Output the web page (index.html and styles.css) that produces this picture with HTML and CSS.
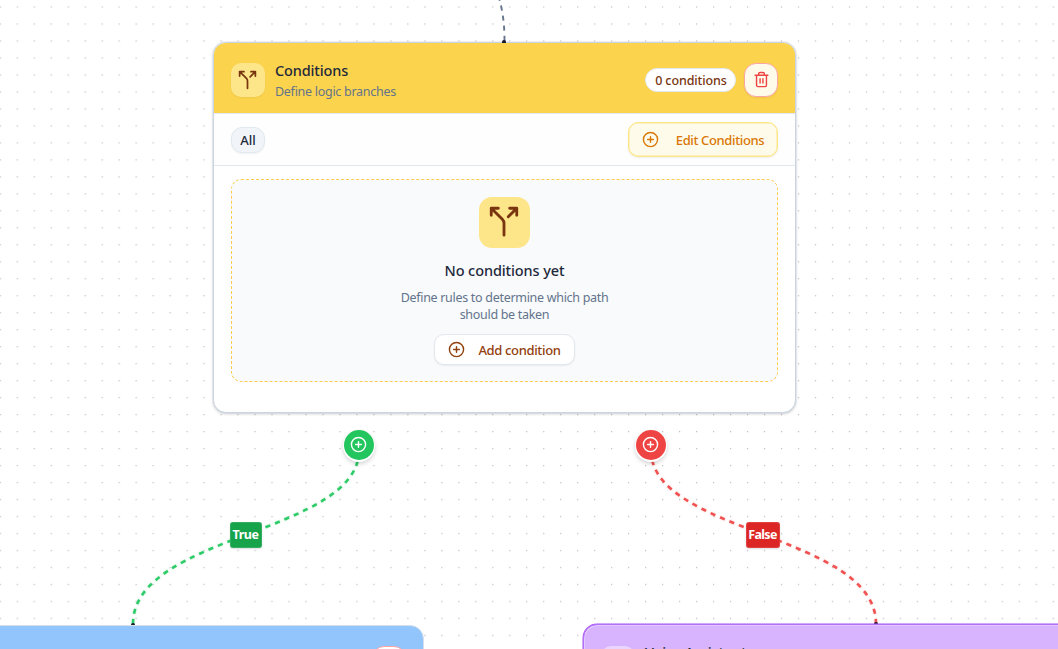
FILE: index.html
```
<!DOCTYPE html>
<html lang="en">
<head>
<meta charset="utf-8">
<title>Flow editor</title>
<link rel="stylesheet" href="styles.css">
</head>
<body>
<svg class="symbols" width="0" height="0">
  <defs>
    <pattern id="dots" x="-0.3" y="6.4" width="16.983" height="16.983" patternUnits="userSpaceOnUse"><circle cx=".65" cy=".65" r=".6" fill="#adadad"/></pattern>
    <symbol id="split" viewBox="0 0 24 24"><path d="M16 3h5v5M8 3H3v5M12 22v-8.300a4 4 0 0 0-1.172-2.872L3 3M15 9l6-6"/></symbol>
    <symbol id="plus" viewBox="0 0 24 24"><circle cx="12" cy="12" r="10"/><path d="M8 12h8M12 8v8"/></symbol>
    <symbol id="trash" viewBox="0 0 24 24"><path d="M3 6h18M19 6v14a2 2 0 0 1-2 2H7a2 2 0 0 1-2-2V6M8 6V4a2 2 0 0 1 2-2h4a2 2 0 0 1 2 2v2M10 11v6M14 11v6"/></symbol>
  </defs>
</svg>
<main class="canvas">
  <svg class="edges" width="1058" height="649">
    <rect width="1058" height="649" fill="url(#dots)"/>
    <path class="edge edge-in" d="M504.500 41C504.500 22 502.500 10 498 -6"/>
    <path class="edge edge-true" d="M133 624C133 534 359 534 359 450"/>
    <path class="edge edge-false" d="M876 624C876 534 651 534 651 450"/>
  </svg>

  <section class="node conditions">
    <header class="node-head">
      <span class="tile tile-small"><svg class="icon"><use href="#split"/></svg></span>
      <div class="titles"><h2 class="title">Conditions</h2><p class="subtitle">Define logic branches</p></div>
      <span class="count">0 conditions</span>
      <button class="delete"><svg class="icon"><use href="#trash"/></svg></button>
    </header>
    <div class="toolbar">
      <span class="filter">All</span>
      <button class="edit"><svg class="icon"><use href="#plus"/></svg><span>Edit Conditions</span></button>
    </div>
    <div class="body">
      <div class="empty">
        <span class="tile tile-large"><svg class="icon"><use href="#split"/></svg></span>
        <h3 class="empty-title">No conditions yet</h3>
        <p class="empty-text">Define rules to determine which path<br>should be taken</p>
        <button class="add"><svg class="icon"><use href="#plus"/></svg><span>Add condition</span></button>
      </div>
    </div>
  </section>

  <button class="handle handle-true"><svg class="icon"><use href="#plus"/></svg></button>
  <button class="handle handle-false"><svg class="icon"><use href="#plus"/></svg></button>
  <span class="branch branch-true">True</span>
  <span class="branch branch-false">False</span>
  <i class="port port-in"></i><i class="port port-true"></i><i class="port port-false"></i>

  <section class="node blue"><button class="delete"><svg class="icon"><use href="#trash"/></svg></button></section>
  <section class="node purple"><span class="tile tile-small"></span><h2 class="title">Voice Assistant</h2></section>
</main>
</body>
</html>
```
FILE: styles.css
```
* { box-sizing: border-box; }
body { margin: 0; font-family: "Noto Sans", "Open Sans", sans-serif; }
h2, h3, p { margin: 0; }
button { font: inherit; padding: 0; margin: 0; }
.symbols { position: absolute; }
.icon { display: block; width: 17px; height: 17px; fill: none; stroke: currentColor; stroke-width: 2; stroke-linecap: round; stroke-linejoin: round; flex: none; }
.canvas { position: relative; width: 1058px; height: 649px; overflow: hidden; background: #fff; }
.edges { position: absolute; inset: 0; }
.edge { fill: none; stroke-width: 2.600; stroke-dasharray: 5.100 5.100; }
.edge-in { stroke: #64748b; stroke-width: 1.900; }
.edge-true { stroke: #2fcb69; filter: drop-shadow(0 0 1px #22c55e44); }
.edge-false { stroke: #f05252; filter: drop-shadow(0 0 1px #ef444444); }

.node { position: absolute; overflow: hidden; }
.conditions { left: 213px; top: 42px; width: 583px; height: 371px; border: 1px solid #cbd5e1; border-radius: 13px; background: #fff; box-shadow: 0 0 0 .5px #cbd5e180, 0 1px 3px #0003; }
.node-head { display: flex; align-items: center; height: 71px; padding: 3px 17px 0; background: #fcd34d; border-bottom: 1px solid #e2e8f0; }
.tile { display: flex; align-items: center; justify-content: center; background: #fde68a; color: #78350f; flex: none; }
.tile-small { width: 34px; height: 34px; border-radius: 10px; box-shadow: 0 1px 2px #0000000d; }
.tile-small .icon { width: 21px; height: 21px; margin-right: 1px; }
.tile-large { width: 51px; height: 51px; border-radius: 13px; }
.tile-large .icon { width: 34px; height: 34px; margin: 0 1px 2px 0; }
.titles { display: flex; flex-direction: column; margin: 3px 0 0 10px; flex: 1; }
.title { font-size: 14.500px; letter-spacing: -.15px; line-height: 20px; font-weight: 500; color: #1e293b; }
.subtitle { font-size: 12.500px; letter-spacing: -.28px; line-height: 20px; margin-top: 2px; color: #64748b; }
.count { display: flex; align-items: center; justify-content: center; width: 91px; height: 24px; margin-right: 9px; padding: 1px 0 0 1px; border: 1px solid #e2e8f0; border-radius: 12px; background: #fff; color: #78350f; font-size: 12.500px; letter-spacing: -.1px; font-weight: 500; }
.node-head .count { margin-right: 8px; }
.delete { display: flex; align-items: center; justify-content: center; width: 34px; height: 34px; border: 1.500px solid #fca5a5; border-radius: 12px; background: #fffbeb; color: #ef4444; box-shadow: 0 1px 2px #0001; }
.toolbar { display: flex; align-items: center; justify-content: space-between; height: 52px; padding: 0 17px; border-bottom: 1px solid #e2e8f0; background: #fefefe; }
.filter { display: flex; align-items: center; justify-content: center; width: 34px; height: 26px; padding-top: 1px; border: 1px solid #e2e8f0; border-radius: 11px; background: #f1f5f9; color: #1e293b; font-size: 13px; font-weight: 500; box-shadow: 0 1px 2px #0000000d; }
.edit { display: flex; align-items: center; justify-content: center; gap: 17px; width: 150px; height: 35px; border: 1px solid #fde68a; border-radius: 10px; background: #fffbeb; color: #d97706; font-size: 13px; letter-spacing: -.37px; font-weight: 500; box-shadow: inset 0 0 0 .5px #fde68a, 0 1px 2px #0001; }
.edit span { padding-top: 1px; }
.body { padding: 13px 17px; }
.empty { display: flex; flex-direction: column; align-items: center; height: 203px; padding-top: 16.500px; border: 1px dashed #fccb50; border-radius: 10px; background: #f8fafc; }
.empty-title { margin-top: 12.500px; font-size: 14.500px; letter-spacing: -.1px; line-height: 20px; font-weight: 500; color: #1e293b; }
.empty-text { margin-top: 9px; font-size: 12.500px; letter-spacing: -.3px; line-height: 17px; color: #64748b; text-align: center; }
.add { display: flex; align-items: center; justify-content: center; gap: 13px; width: 141px; height: 31px; margin-top: 11px; border: 1.500px solid #e2e8f0; border-radius: 10px; background: #fff; color: #92400e; font-size: 13px; letter-spacing: -.35px; font-weight: 500; box-shadow: 0 1px 2px #0001; }
.add span { padding-top: 1px; }

.handle { position: absolute; top: 429.500px; display: flex; align-items: center; justify-content: center; width: 30px; height: 30px; border: 0; border-radius: 50%; color: #fff; box-shadow: 0 1px 0 1px #fff, 0 3px 4px 1px #0000002b; }
.handle-true { left: 343.500px; background: #22c55e; }
.handle-false { left: 635.500px; background: #ef4444; }
.branch { position: absolute; top: 522px; display: flex; align-items: center; justify-content: center; height: 26px; padding: 0 1px 2px 0; border-radius: 3px; color: #fff; font-size: 12.500px; letter-spacing: -.45px; font-weight: 700; }
.branch-true { left: 230px; width: 32px; background: #16a34a; box-shadow: inset 0 0 0 1px #fff2, 0 1px 2px #0002; }
.branch-false { left: 746px; width: 34px; background: #dc2626; box-shadow: inset 0 0 0 1px #fff2, 0 1px 2px #0002; letter-spacing: -.7px; }
.port { position: absolute; width: 4px; height: 3px; border-radius: 2px 2px 0 0; background: #1a192b; }
.port-in { left: 502px; top: 39.500px; }
.port-true { left: 131px; top: 623px; }
.port-false { left: 874px; top: 622px; }
.blue { left: -161px; top: 625px; width: 585px; height: 80px; border: 1px solid #d6dfea; border-radius: 14px; background: #93c5fd; display: flex; justify-content: flex-end; align-items: flex-start; padding: 20px 17px; }
.blue .delete { background: #fff; }
.purple { left: 583px; top: 624px; width: 585px; height: 80px; border: 1.500px solid #b26ff8; border-radius: 14px; background: #d8b4fe; display: flex; align-items: flex-start; gap: 10px; padding: 21px 17px; box-shadow: inset 1px 1px 0 #e3c8ff, 0 0 0 .5px #a855f7; }
.purple .tile { background: #e9d5ff; }
.purple .title { margin-top: -4px; }
```
